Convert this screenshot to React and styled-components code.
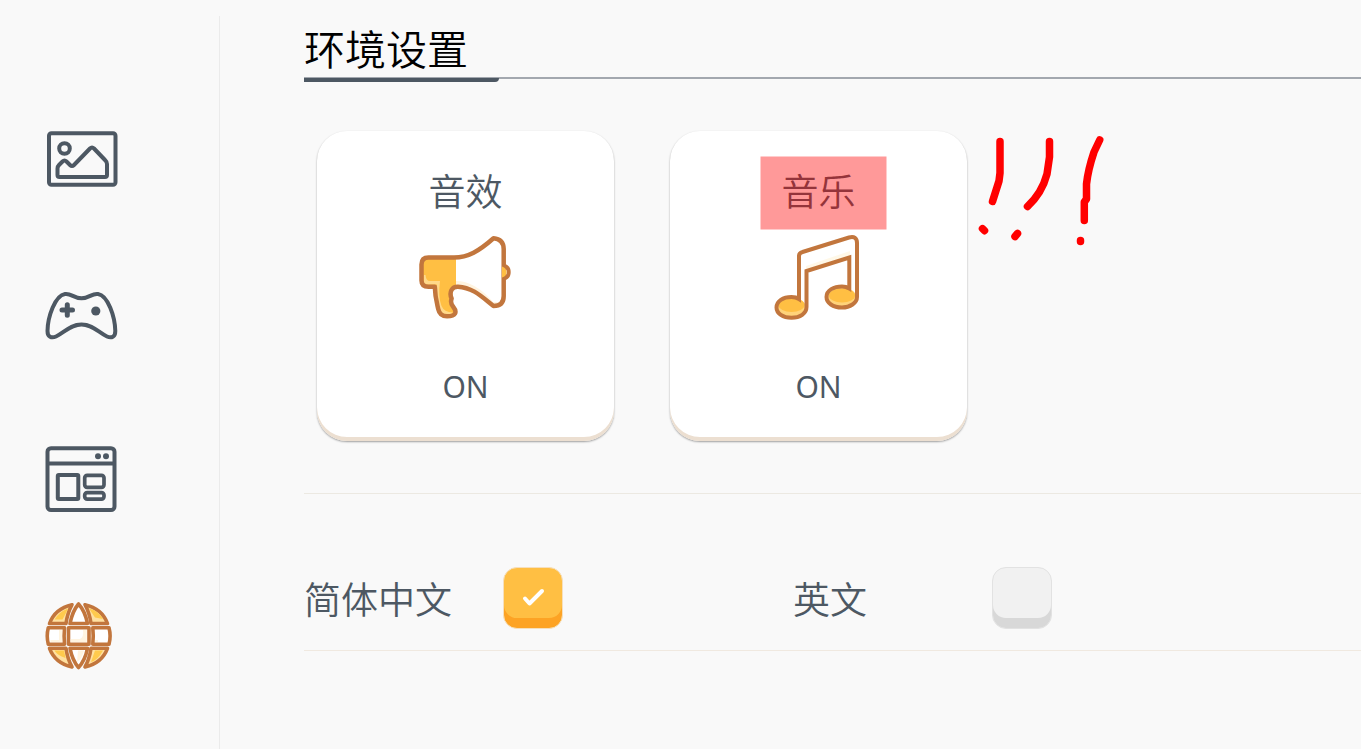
import React, { useState } from "react";
import styled, { createGlobalStyle } from "styled-components";

const INK = "#4d5863";
const BROWN = "#c2763d";

const GlobalStyle = createGlobalStyle`
  *, *::before, *::after { box-sizing: border-box; }
  body {
    margin: 0;
    background: #f9f9f9;
    color: ${INK};
    font-family: "Noto Sans", "Noto Sans CJK SC", sans-serif;
  }
  button { font: inherit; color: inherit; cursor: pointer; }
`;

const Page = styled.div`
  display: flex;
  min-height: 100vh;
  padding-top: 16px;
`;

const Sidebar = styled.nav`
  flex: none;
  display: flex;
  flex-direction: column;
  gap: 80px;
  width: 220px;
  padding: 103px 0 0 40px;
  border-right: 1px solid #ebebeb;
`;

const NavButton = styled.button`
  width: 80px;
  height: 80px;
  padding: 0;
  border: 0;
  background: none;

  svg { display: block; }
`;

const Main = styled.main`
  flex: 1;
  min-width: 0;
  padding-left: 84px;
`;

const Header = styled.header`
  display: flex;
  border-bottom: 2px solid #a3a8af;
`;

const Title = styled.h1`
  width: 195px;
  height: 66px;
  margin: 0 0 -5px;
  border-bottom: 4px solid ${INK};
  border-bottom-right-radius: 4px;
  color: #000;
  font-family: "Noto Sans CJK SC", sans-serif;
  font-size: 41px;
  font-weight: 350;
  line-height: 62px;
  white-space: nowrap;
`;

const Cards = styled.section`
  position: relative;
  display: flex;
  gap: 56px;
  padding: 52px 0 52px 13px;
  border-bottom: 1px solid #ece9e2;
`;

const Card = styled.button`
  flex: none;
  display: flex;
  flex-direction: column;
  align-items: center;
  width: 297px;
  height: 310px;
  padding: 32px 0 0;
  border: 0;
  border-radius: 30px;
  background: #fff;
  box-shadow: inset 0 -4px 0 #ecdfd1, 0 1px 2px rgba(0, 0, 0, 0.36);
`;

const CardLabel = styled.span`
  font-family: "Noto Sans CJK SC", sans-serif;
  font-size: 37px;
  font-weight: 350;
  line-height: 54px;
`;

const CardIcon = styled.svg`
  width: 110px;
  height: 100px;
  margin-top: 10px;
`;

const CardState = styled.span`
  margin-top: 40px;
  font-size: 30px;
  line-height: 40px;
`;

const Marks = styled.svg`
  position: absolute;
  top: 41px;
  left: 446px;
  width: 370px;
  height: 140px;
  pointer-events: none;
`;

const Languages = styled.section`
  display: flex;
  height: 157px;
  padding-top: 73px;
  border-bottom: 1px solid #f0e9e0;
`;

const Option = styled.label`
  flex: none;
  display: flex;
  width: 489px;
  font-family: "Noto Sans CJK SC", sans-serif;
  font-size: 37px;
  font-weight: 350;
  line-height: 62px;
`;

const OptionText = styled.span`
  width: 199px;
`;

const CheckWrap = styled.span`
  display: grid;
  width: 60px;
  height: 62px;

  > * { grid-area: 1 / 1; }
  svg { pointer-events: none; z-index: 1; }
`;

const Check = styled.input`
  appearance: none;
  width: 60px;
  height: 62px;
  margin: 0;
  border: 1px solid #e2e2e2;
  border-radius: 14px;
  background: #f1f1f1;
  box-shadow: inset 0 -10px 0 #d8d8d8;

  &:checked {
    border-color: #f6dfbd;
    background: #ffbf43;
    box-shadow: inset 0 -10px 0 #fda324;
  }
`;

const PictureIcon = () => (
  <svg width="80" height="80" viewBox="40 119 80 80" fill="none" stroke={INK} strokeWidth="4" strokeLinejoin="round">
    <rect x="49" y="133.300" width="66.500" height="51.500" rx="2.500" />
    <circle cx="64.500" cy="148.500" r="5.300" />
    <path d="M57.500 168.500 Q57.500 166.500 59 165 L62.500 161.500 Q64.500 159.500 66.500 161.500 L70 165 Q72 167 74 165 L90 148.500 Q92 146.500 94 148.500 L105 160 Q107 162 107 164 V175 Q107 177 105 177 H59.500 Q57.500 177 57.500 175 Z" />
  </svg>
);

const GamepadIcon = () => (
  <svg width="80" height="80" viewBox="40 279 80 80" fill="none" stroke={INK} strokeWidth="4" strokeLinecap="round" strokeLinejoin="round">
    <path d="M65 294 C71 293 74 298.300 81.500 298.300 C89 298.300 92 293 98 294 C108 295.500 115 317 115.300 331 C115.300 337 111.500 338.500 107 336.500 C99 333 93 324.500 81.500 324.500 C70 324.500 64 333 56 336.500 C51.500 338.500 47.500 337 47.500 331 C47.700 317 55 295.500 65 294 Z" />
    <path d="M62 310 H72.500 M67.300 304.700 V315.300" strokeWidth="5" />
    <circle cx="95.800" cy="311" r="4.600" fill={INK} stroke="none" />
  </svg>
);

const WindowIcon = () => (
  <svg width="80" height="80" viewBox="40 439 80 80" fill="none" stroke={INK} strokeWidth="4">
    <rect x="47.500" y="448.200" width="67" height="61.800" rx="3.500" />
    <path d="M47 463.500 H115" />
    <circle cx="98" cy="456.300" r="3" fill={INK} stroke="none" />
    <circle cx="106" cy="456.300" r="3" fill={INK} stroke="none" />
    <rect x="57.800" y="475" width="20.500" height="24" rx="1" />
    <rect x="84.700" y="475.300" width="19.300" height="12" rx="2.500" strokeWidth="3.700" />
    <rect x="84.700" y="492.600" width="19.300" height="6.500" rx="2.500" strokeWidth="3.700" />
  </svg>
);

const GlobeIcon = () => (
  <svg width="80" height="80" viewBox="40 599 80 80" stroke={BROWN} strokeWidth="3.600" strokeLinejoin="round">
    <g fill="#ffe0a0">
      <path d="M72 604.700 Q55 608.500 49.500 623.500 H66 Q67.500 613 72 604.700 Z" />
      <path d="M85 604.700 Q102 608.500 107.500 623.500 H91 Q89.500 613 85 604.700 Z" />
      <path d="M72 667 Q55 663 49.500 648.300 H66 Q67.500 659 72 667 Z" />
      <path d="M85 667 Q102 663 107.500 648.300 H91 Q89.500 659 85 667 Z" />
    </g>
    <g fill="#ffca4d" stroke="none">
      <path d="M68 608.500 Q59 612 54.500 619.500 H62.500 L66 613 Z" />
      <path d="M89 608.500 Q99 611 103 619 L95 617.500 Z" />
      <path d="M54.500 650.500 H64 L65.500 658 Q57 655 54.500 650.500 Z" />
      <path d="M95 650.500 H103 Q98 660 91 662 Z" />
    </g>
    <g fill="#fff">
      <path d="M78.500 604 Q72.500 611 70 623.500 H87.500 Q85 611 78.500 604 Z" />
      <path d="M78.500 667.500 Q72.500 660.500 70 648.300 H87.500 Q85 660.500 78.500 667.500 Z" />
      <path d="M48.300 627.800 Q46.200 636 48.300 644.200 H64.500 Q63.700 636 64.500 627.800 Z" />
      <rect x="68.500" y="627.800" width="20.500" height="16.400" />
      <path d="M109 627.800 Q111.200 636 109 644.200 H92.800 Q93.700 636 92.800 627.800 Z" />
    </g>
    <path d="M50.500 642 V640 H59 V630 H62 V642 Z M70.800 642 V639 H80 Q84 637 83 630 H86.800 V642 Z M95 642 V640 H98 V642 Z M77 662 Q82 659 84 650.500 H78 Z" fill="#fff4e0" stroke="none" />
  </svg>
);

const HornIcon = () => (
  <CardIcon viewBox="411 227 110 100" aria-hidden="true">
    <path d="M427 257.500 H456 V286 Q451 288 452.500 295 Q450 301 454 307 Q458 311 454 314 Q448 318 440 315.500 Q436 312 434.500 286.500 H427 Q421.500 286.500 421.500 280.500 V263.500 Q421.500 257.500 427 257.500 Z" fill="#ffbf43" />
    <path d="M424 275 V284.500 H437 Q437 303 441 314 Q448 317 453 312.500 Q444 312 441.500 306 Q438 297 440 281 H430 Q426 281 425.500 275 Z" fill="#ffd98a" />
    <path d="M456 257 Q471 256.500 493 238 Q503 239 503.500 247 V298 Q502 306 494 306 Q472 286 456 285.500 Z" fill="#fff" />
    <path d="M456 281 Q475 281 493 302 L498 302 L494 306 Q472 286 456 285.500 Z" fill="#fff4e0" />
    <g fill="none" stroke={BROWN} strokeWidth="4.500" strokeLinejoin="round">
      <path d="M493.500 238.200 C479 251 468 257.500 454 257.500 H428.500 Q421.500 257.500 421.500 264.500 V280.500 Q421.500 286.700 428.500 286.700 H434.800 C435 297 437 303.500 438.200 309 Q439.800 316.300 447 316.300 C456 316.300 457.500 312 453 306.500 Q450 303 451.600 298.500 Q449.500 294 451.500 290 Q453.500 286.500 458 286.700 C473 287.500 482 297 493.500 306 Q503.700 306 503.700 296 V249 Q503.500 239 493.500 238.200 Z" />
      <path d="M504 266 Q508.700 267 508.700 272 Q508.700 277.500 504 278.500" strokeWidth="4" />
    </g>
    <path d="M502 266.500 Q506.700 268 506.500 272.500 Q506.300 276.500 502 277.500 Z" fill="#ffbf43" />
  </CardIcon>
);

const MusicIcon = () => (
  <CardIcon viewBox="764 227 110 100" aria-hidden="true">
    <path d="M798.500 257 Q798.500 253 802 252 L849 237.500 Q856.500 235.500 857 243 V297 H850.500 V257 L806.500 271.500 V307 H798.500 Z" fill="#fff" />
    <path d="M806 266 L850 251 V256 L806 270 Z" fill="#fff8e8" />
    <g fill="#ffd37a">
      <ellipse cx="791.500" cy="307.500" rx="14.500" ry="10" />
      <ellipse cx="842" cy="297.500" rx="14.500" ry="10" />
    </g>
    <g fill="#ffbf43">
      <ellipse cx="791.500" cy="305" rx="13" ry="7" />
      <ellipse cx="842" cy="295.500" rx="13" ry="7" />
    </g>
    <path d="M799 299 V256 Q799 253 802.500 252 L849 237.500 Q857 235.500 857 243 V297 C857 303 850 307.500 842 307.500 C833 307.500 826.500 303 826.500 297 C826.500 290 834 286.500 842 286.500 Q846 286.500 849.300 288.500 V257.500 L806.500 271 V307 C806.500 313.500 800 317.700 791.500 317.700 C783 317.700 776.500 313.500 776.500 307.500 C776.500 301 783 297 791.500 297 Q796 297 799 299 Z" fill="none" stroke={BROWN} strokeWidth="4" />
  </CardIcon>
);

const Tick = () => (
  <svg width="60" height="62" viewBox="503 567 60 62" fill="none" stroke="#fff" strokeWidth="4" strokeLinecap="round" strokeLinejoin="round" aria-hidden="true">
    <path d="M525 598.500 L529.500 603.500 L542 591" />
  </svg>
);

const navItems = [
  { label: "图片", Icon: PictureIcon },
  { label: "游戏", Icon: GamepadIcon },
  { label: "布局", Icon: WindowIcon },
  { label: "环境设置", Icon: GlobeIcon },
];

function SoundCard({ label, Icon }) {
  const [on, setOn] = useState(true);
  return (
    <Card type="button" aria-pressed={on} onClick={() => setOn(!on)}>
      <CardLabel>{label}</CardLabel>
      <Icon />
      <CardState>{on ? "ON" : "OFF"}</CardState>
    </Card>
  );
}

function LanguageOption({ id, label, initial }) {
  const [checked, setChecked] = useState(initial);
  return (
    <Option htmlFor={id}>
      <OptionText>{label}</OptionText>
      <CheckWrap>
        <Check id={id} type="checkbox" checked={checked} onChange={(e) => setChecked(e.target.checked)} />
        {checked && <Tick />}
      </CheckWrap>
    </Option>
  );
}

export default function App() {
  return (
    <>
      <GlobalStyle />
      <Page>
        <Sidebar>
          {navItems.map(({ label, Icon }) => (
            <NavButton key={label} type="button" aria-label={label}>
              <Icon />
            </NavButton>
          ))}
        </Sidebar>
        <Main>
          <Header>
            <Title>环境设置</Title>
          </Header>
          <Cards>
            <SoundCard label="音效" Icon={HornIcon} />
            <SoundCard label="音乐" Icon={MusicIcon} />
            <Marks viewBox="750 120 370 140" fill="none" stroke="#f00" strokeLinecap="round" strokeLinejoin="round" aria-hidden="true">
              <rect x="760.500" y="156.500" width="126" height="73" fill="#f00" fillOpacity="0.4" stroke="none" />
              <g strokeWidth="7.500">
                <path d="M1000 141.500 V173 L999 181 L992.500 201.500" />
                <path d="M1049.500 141.500 V157 L1047 174 Q1042 193 1027.500 206.500" />
                <path d="M1099.700 140 L1094 152 Q1088 170 1086.500 184 V199 L1084.300 202 V220.500" />
                <path d="M982.500 228.700 L984.500 230.700 M1015 236.500 L1017.500 233.500 M1080.500 240.500 V241.500" />
              </g>
            </Marks>
          </Cards>
          <Languages>
            <LanguageOption id="lang-zh" label="简体中文" initial={true} />
            <LanguageOption id="lang-en" label="英文" initial={false} />
          </Languages>
        </Main>
      </Page>
    </>
  );
}
